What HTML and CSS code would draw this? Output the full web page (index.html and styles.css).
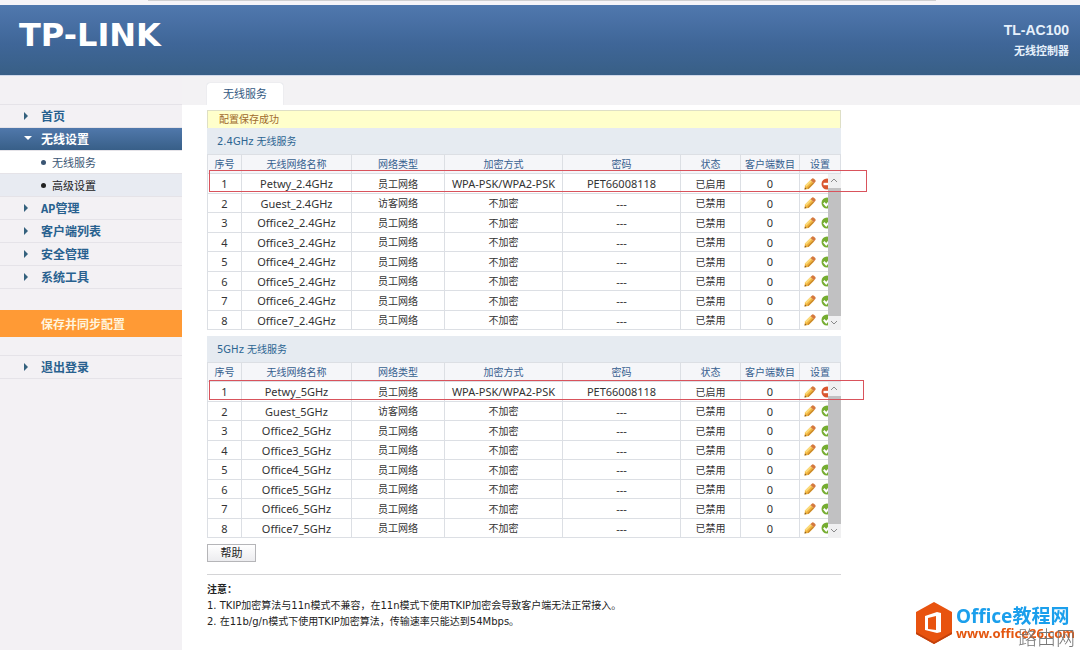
FILE: index.html
```html
<!DOCTYPE html>
<html lang="zh-CN">
<head>
    <meta charset="UTF-8">
    <meta name="viewport" content="width=device-width, initial-scale=1.0">
    <title>TL-AC100</title>
    <link rel="stylesheet" href="styles.css">
</head>
<body>
    <div class="top-strip"></div>
    <header class="header">
        <div class="logo">TP-LINK</div>
        <div class="product">
            <div class="model">TL-AC100</div>
            <div class="model-desc">无线控制器</div>
        </div>
    </header>

    <div class="layout">
        <aside class="sidebar">
            <nav>
                <ul class="menu">
                    <li><a class="item" href="#">首页</a></li>
                    <li><a class="item open" href="#">无线设置</a></li>
                    <li><a class="sub current" href="#">无线服务</a></li>
                    <li><a class="sub" href="#">高级设置</a></li>
                    <li><a class="item" href="#">AP管理</a></li>
                    <li><a class="item" href="#">客户端列表</a></li>
                    <li><a class="item" href="#">安全管理</a></li>
                    <li><a class="item" href="#">系统工具</a></li>
                </ul>
                <button class="save-btn" type="button">保存并同步配置</button>
                <ul class="menu">
                    <li><a class="item" href="#">退出登录</a></li>
                </ul>
            </nav>
        </aside>

        <main class="main">
            <div class="tabs">
                <a class="tab" href="#">无线服务</a>
            </div>
            <div class="content">
                <div class="notice">配置保存成功</div>

                <section class="service">
                    <h2>2.4GHz 无线服务</h2>
                    <div class="table-box" data-band="2.4GHz"></div>
                </section>
                <section class="service">
                    <h2>5GHz 无线服务</h2>
                    <div class="table-box narrow" data-band="5GHz"></div>
                </section>

                <button class="help-btn" type="button">帮助</button>

                <div class="notes">
                    <strong>注意：</strong>
                    <p>1. TKIP加密算法与11n模式不兼容，在11n模式下使用TKIP加密会导致客户端无法正常接入。</p>
                    <p>2. 在11b/g/n模式下使用TKIP加密算法，传输速率只能达到54Mbps。</p>
                </div>
            </div>
        </main>
    </div>

    <div class="watermark">
        <svg class="hexagon" viewBox="0 0 36 42" width="36" height="42">
            <path d="M18 0 L36 10 V32 L18 42 L0 32 V10 Z" fill="#e8530f"/>
            <path d="M0 32 L18 42 L36 32 V30 L18 40 L0 30 Z" fill="#c2410c"/>
            <path d="M9 14 L21 10 L25 11 V30 L21 31 L9 28 Z" fill="#fff"/>
            <path d="M12 16 L20 14 V28 L12 27 Z" fill="#e8530f"/>
        </svg>
        <div class="watermark-text">
            <div class="site-name">Office教程网</div>
            <div class="site-url">www.office26.com</div>
        </div>
        <div class="stamp">路由网</div>
    </div>

    <script>
        const names = ['Petwy', 'Guest', 'Office2', 'Office3', 'Office4', 'Office5', 'Office6', 'Office7'];

        const pencil = `
            <svg viewBox="0 0 12 12" width="12" height="12">
                <path d="M0.5 11.5 L1 7.5 L6.5 2 L10 5.5 L4.5 11 Z" fill="#f2b640"/>
                <path d="M1 7.5 L6.5 2 L7.8 3.3 L2.3 8.8 Z" fill="#fbdc7c"/>
                <path d="M3.5 10 L9 4.5 L10 5.5 L4.5 11 Z" fill="#c98a2c"/>
                <path d="M6.5 2 L8.2 0.5 Q9 0 9.9 0.8 L11.3 2.1 Q12 3 11.4 3.8 L10 5.5 Z" fill="#d4793e"/>
                <path d="M0.5 11.5 L1 9.4 L2.6 11 Z" fill="#7c5424"/>
            </svg>`;
        const disable = `
            <svg viewBox="0 0 12 12" width="12" height="12">
                <circle cx="6" cy="6" r="5.5" fill="#d9562f"/>
                <rect x="2.5" y="4.8" width="7" height="2.4" fill="#fff"/>
            </svg>`;
        const enable = `
            <svg viewBox="0 0 12 12" width="12" height="12">
                <circle cx="6" cy="6" r="5.5" fill="#76ad32"/>
                <path d="M2.8 5.8 L5.2 8.4 L9.2 3.8" fill="none" stroke="#fff" stroke-width="2"/>
            </svg>`;

        function buildRow(name, index, band) {
            const first = index === 0;
            return `
                <tr>
                    <td class="latin">${index + 1}</td>
                    <td class="latin">${name}_${band}</td>
                    <td>${index === 1 ? '访客网络' : '员工网络'}</td>
                    ${first ? '<td class="latin">WPA-PSK/WPA2-PSK</td>' : '<td>不加密</td>'}
                    <td class="latin">${first ? 'PET66008118' : '---'}</td>
                    <td>${first ? '已启用' : '已禁用'}</td>
                    <td class="latin">0</td>
                    <td class="set">
                        <div class="actions">
                            <button type="button" aria-label="编辑">${pencil}</button>
                            <button type="button" aria-label="${first ? '禁用' : '启用'}">${first ? disable : enable}</button>
                        </div>
                    </td>
                </tr>`;
        }

        document.querySelectorAll('.table-box').forEach(box => {
            const rows = names.map((name, i) => buildRow(name, i, box.dataset.band)).join('');
            box.innerHTML = `
                <table>
                    <colgroup>
                        <col class="c-no"><col class="c-name"><col class="c-type"><col class="c-enc">
                        <col class="c-pwd"><col class="c-state"><col class="c-count"><col class="c-set">
                    </colgroup>
                    <thead>
                        <tr>
                            <th>序号</th><th>无线网络名称</th><th>网络类型</th><th>加密方式</th>
                            <th>密码</th><th>状态</th><th>客户端数目</th><th>设置</th>
                        </tr>
                    </thead>
                    <tbody>${rows}</tbody>
                </table>
                <div class="scrollbar">
                    <svg viewBox="0 0 12 14" width="12" height="14"><path d="M3 8 L6 5 L9 8" fill="none" stroke="#8a8a8a"/></svg>
                    <div class="thumb"></div>
                    <svg viewBox="0 0 12 14" width="12" height="14"><path d="M3 5 L6 8 L9 5" fill="none" stroke="#8a8a8a"/></svg>
                </div>
                <div class="highlight"></div>`;
        });
    </script>
</body>
</html>
```
FILE: styles.css
```css
* {
    margin: 0;
    padding: 0;
    box-sizing: border-box;
}

body {
    font-family: "DejaVu Sans", "Noto Sans CJK SC", sans-serif;
    font-size: 10px;
    color: #333;
    background: #fff;
    min-height: 100vh;
    display: flex;
    flex-direction: column;
}

a {
    text-decoration: none;
}

ul {
    list-style: none;
}

button {
    font-family: inherit;
    border: none;
    cursor: pointer;
}

.top-strip {
    height: 5px;
    background: linear-gradient(#cfcfd1, #cfcfd1) 148px 0 / 73% 1px no-repeat #f5f4f8;
}

.header {
    height: 71px;
    padding: 0 11px 0 19px;
    display: flex;
    justify-content: space-between;
    background: linear-gradient(#5078ae, #3f6698 55%, #385f86);
    border-bottom: 1px solid #cfd8ea;
    color: #fff;
}

.logo {
    font-size: 32px;
    font-weight: bold;
    line-height: 60px;
}

.product {
    padding-top: 16px;
    text-align: right;
    font-weight: bold;
    color: #e6f0fb;
}

.model {
    font-family: "Liberation Sans", sans-serif;
    font-size: 14px;
    line-height: 18px;
}

.model-desc {
    font-size: 11px;
    line-height: 26px;
}

.layout {
    flex: 1;
    display: flex;
}

.sidebar {
    flex: 0 0 182px;
    padding-top: 28px;
    background: #f3f1f4;
}

.menu {
    border-top: 1px solid #e5e3e8;
}

.item,
.sub {
    height: 23px;
    display: flex;
    align-items: center;
    border-bottom: 1px solid #e5e3e8;
}

.item {
    padding-left: 24px;
    font-family: "Liberation Mono", "Noto Sans CJK SC", monospace;
    font-size: 12px;
    font-weight: bold;
    color: #28618f;
}

.item::before {
    content: "";
    width: 17px;
    height: 8px;
    background: #34617d;
    clip-path: polygon(0 0, 4px 4px, 0 8px);
}

.item.open {
    color: #fff;
    background: linear-gradient(#5078ab, #385f88);
}

.item.open::before {
    background: #fff;
    clip-path: polygon(0 1px, 8px 1px, 4px 5px);
}

.sub {
    padding-left: 41px;
    font-size: 11px;
    color: #222;
    background: #e8ebf2;
}

.sub::before {
    content: "";
    width: 5px;
    height: 5px;
    margin-right: 6px;
    border-radius: 50%;
    background: currentColor;
}

.sub.current {
    color: #3a5573;
    background: #fff;
}

.save-btn {
    display: block;
    width: 100%;
    height: 27px;
    margin: 21px 0 18px;
    padding-left: 41px;
    font-size: 12px;
    font-weight: bold;
    text-align: left;
    color: #fff4dc;
    background: #ff9a35;
}

.main {
    flex: 1;
}

.tabs {
    height: 29px;
    padding-left: 25px;
    display: flex;
    align-items: flex-end;
    background: #f3f2f4;
}

.tab {
    width: 76px;
    height: 22px;
    border-radius: 3px 3px 0 0;
    font-size: 11px;
    line-height: 24px;
    text-align: center;
    color: #32587f;
    background: #fff;
    box-shadow: 0 0 1px #b8c0cc;
    clip-path: inset(-2px -2px 0 -2px);
}

.content {
    max-width: 659px;
    padding: 5px 0 16px 25px;
}

.notice {
    height: 18px;
    padding-left: 11px;
    border: 1px solid #dedfc6;
    border-bottom: none;
    line-height: 18px;
    color: #a06a2c;
    background: #ffffcb;
}

.service {
    margin-bottom: 6px;
}

.service h2 {
    height: 26px;
    padding-left: 10px;
    font-size: 10px;
    font-weight: normal;
    line-height: 28px;
    color: #2c6591;
    background: #e6ebf1;
}

.table-box {
    position: relative;
}

table {
    width: 100%;
    table-layout: fixed;
    border-spacing: 0;
    border-left: 1px solid #dcdfe4;
}

.c-no { width: 34px; }
.c-type { width: 93px; }
.c-enc,
.c-pwd { width: 118px; }
.c-state { width: 60px; }
.c-count { width: 59px; }
.c-set { width: 41px; }

th,
td {
    height: 20px;
    padding-top: 1px;
    border-right: 1px solid #dcdfe4;
    border-bottom: 1px solid #dcdfe4;
    text-align: center;
    font-weight: normal;
    line-height: 17px;
    white-space: nowrap;
}

th {
    border-top: 1px solid #dcdfe4;
    color: #35608f;
    background: #f5f6f9;
}

tbody tr:nth-child(even) td {
    height: 19px;
}

.latin {
    padding-top: 0;
    font-family: "Noto Sans", sans-serif;
    font-size: 11px;
}

.set {
    padding-top: 0;
}

.actions {
    display: flex;
    gap: 5px;
    padding-left: 4px;
}

.actions button {
    width: 12px;
    height: 12px;
    background: none;
}

.actions svg,
.scrollbar svg {
    display: block;
}

.scrollbar {
    position: absolute;
    top: 20px;
    right: 0;
    bottom: 0;
    width: 13px;
    display: flex;
    flex-direction: column;
    background: #f0f0f1;
}

.thumb {
    flex: 1;
    background: #c1c1c2;
}

/* red frame round the first network */
.highlight {
    position: absolute;
    top: 16px;
    left: 2px;
    right: -26px;
    height: 22px;
    border: 1px solid #d9535c;
    pointer-events: none;
}

.narrow .highlight {
    top: 18px;
    right: -23px;
    height: 20px;
}

.help-btn {
    display: block;
    width: 49px;
    height: 18px;
    font-size: 11px;
    line-height: 18px;
    color: #222;
    border: 1px solid #b5b5b8;
    background: linear-gradient(#fff, #ececef);
}

.notes {
    margin-top: 12px;
    padding-top: 7px;
    border-top: 1px solid #d4d4d6;
    line-height: 16px;
    color: #222;
}

.watermark {
    position: fixed;
    right: 5px;
    bottom: 6px;
    display: flex;
    gap: 4px;
}

.site-name {
    font-family: "Noto Sans", "Noto Sans CJK SC", sans-serif;
    font-size: 19px;
    font-weight: bold;
    line-height: 28px;
    color: #1b9fec;
}

.site-url {
    font-family: "Noto Sans", sans-serif;
    font-size: 13px;
    font-weight: bold;
    line-height: 6px;
    color: #e4560f;
}

.stamp {
    position: absolute;
    right: 0;
    bottom: -5px;
    font-size: 19px;
    font-weight: 300;
    line-height: 22px;
    color: #777;
}
```
